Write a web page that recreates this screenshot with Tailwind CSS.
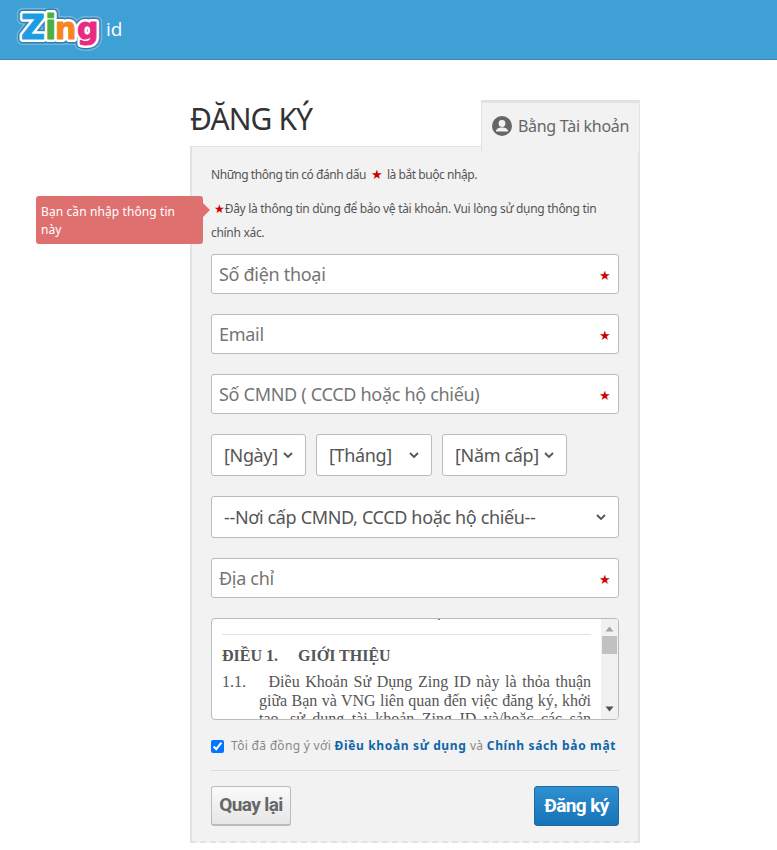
<!DOCTYPE html>
<html lang="vi">
  <head>
    <meta charset="UTF-8" />
    <title>Zing ID - Đăng ký</title>
    <script src="https://cdn.jsdelivr.net/npm/@tailwindcss/browser@4"></script>
  </head>
  <body class="bg-white font-['Noto_Sans',sans-serif] text-[#555]">
    <!-- Header -->
    <header class="h-[60px] bg-[#3fa0d6] border-b border-[#3a87b8] flex items-center pl-[15px]">
      <svg width="90" height="44" viewBox="0 0 90 44" class="block">
        <g font-family="DejaVu Sans" font-weight="700" font-size="33" stroke-linejoin="round">
          <g stroke="#76b6dc" stroke-width="12" fill="none">
            <text x="6" y="31">Z</text><text x="30" y="31">i</text><text x="40" y="31" font-size="30">n</text><text x="62" y="31" font-size="30">g</text>
          </g>
          <g stroke="#2f7fb3" stroke-width="9" fill="none">
            <text x="6" y="31">Z</text><text x="30" y="31">i</text><text x="40" y="31" font-size="30">n</text><text x="62" y="31" font-size="30">g</text>
          </g>
          <g stroke="#fff" stroke-width="6" fill="#fff">
            <text x="6" y="31">Z</text><text x="30" y="31">i</text><text x="40" y="31" font-size="30">n</text><text x="62" y="31" font-size="30">g</text>
          </g>
          <g stroke-width="1">
            <text x="6" y="31" fill="#1b9ce3" stroke="#1b9ce3">Z</text>
            <text x="30" y="31" fill="#4caf3f" stroke="#4caf3f">i</text>
            <text x="40" y="31" font-size="30" fill="#f6861f" stroke="#f6861f">n</text>
            <text x="62" y="31" font-size="30" fill="#ea2a82" stroke="#ea2a82">g</text>
          </g>
        </g>
      </svg>
      <span class="ml-[1px] text-[19px] text-white font-['Open_Sans',sans-serif]">id</span>
    </header>

    <main class="relative w-[450px] ml-[190px]">
      <!-- Title and tab -->
      <div class="h-[86px] flex justify-between items-start pt-[40px]">
        <h1 class="text-[30px] leading-[38px] tracking-[-0.9px] text-[#333]">ĐĂNG KÝ</h1>
        <div class="relative z-10 w-[159px] h-[52px] bg-[#f2f2f2] border-x border-[#e2e2e2] border-t-[3px] flex items-center pl-[10px] gap-[6px] pb-[3px]">
          <svg width="20" height="20" viewBox="0 0 20 20">
            <circle cx="10" cy="10" r="10" fill="#666" />
            <circle cx="10" cy="7.500" r="3.400" fill="#f2f2f2" />
            <path d="M4 15.500c0-2.800 2.600-4 6-4s6 1.200 6 4z" fill="#f2f2f2" />
          </svg>
          <span class="text-base tracking-[-0.3px] text-[#666]">Bằng Tài khoản</span>
        </div>
      </div>

      <!-- Form panel -->
      <div class="h-[697px] bg-[#f2f2f2] border-x-2 border-t border-b-2 border-[#e2e2e2] [border-bottom-style:dashed] px-[19px] pt-[15px]">
        <p class="text-xs leading-[24px] tracking-[-0.45px]">
          Những thông tin có đánh dấu <span class="text-[#c00] text-[13px] mx-[2px]">★</span> là bắt buộc nhập.
        </p>
        <p class="text-xs leading-[24px] tracking-[-0.3px] mt-[10px]">
          <span class="text-[#c00] ml-[3px]">★</span>Đây là thông tin dùng để bảo vệ tài khoản. Vui lòng sử dụng thông tin chính xác.
        </p>

        <div class="relative mt-[9px]">
          <input placeholder="Số điện thoại" class="w-full h-[40px] bg-white border border-[#bbb] rounded-[3px] pl-[7px] pr-2 text-lg tracking-[-0.3px] placeholder:text-[#757575]" />
          <span class="absolute right-[8px] top-[12px] text-[#c00] text-[13px]">★</span>
        </div>
        <div class="relative mt-[20px]">
          <input placeholder="Email" class="w-full h-[40px] bg-white border border-[#bbb] rounded-[3px] pl-[7px] pr-2 text-lg tracking-[-0.3px] placeholder:text-[#757575]" />
          <span class="absolute right-[8px] top-[12px] text-[#c00] text-[13px]">★</span>
        </div>
        <div class="relative mt-[20px]">
          <input placeholder="Số CMND ( CCCD hoặc hộ chiếu)" class="w-full h-[40px] bg-white border border-[#bbb] rounded-[3px] pl-[7px] pr-2 text-lg tracking-[-0.3px] placeholder:text-[#757575]" />
          <span class="absolute right-[8px] top-[12px] text-[#c00] text-[13px]">★</span>
        </div>

        <!-- Date selects -->
        <div class="flex gap-[10px] mt-[20px]">
          <div class="relative w-[95px] h-[42px] bg-white border border-[#bbb] rounded-[3px] flex items-center pl-[12px] text-lg tracking-[-0.35px]">
            [Ngày]
            <svg class="absolute right-[12px] top-[16px]" width="10" height="8" viewBox="0 0 10 8"><path d="M1 2l4 4 4-4" fill="none" stroke="#555" stroke-width="1.800" /></svg>
          </div>
          <div class="relative w-[116px] h-[42px] bg-white border border-[#bbb] rounded-[3px] flex items-center pl-[12px] text-lg tracking-[-0.35px]">
            [Tháng]
            <svg class="absolute right-[12px] top-[16px]" width="10" height="8" viewBox="0 0 10 8"><path d="M1 2l4 4 4-4" fill="none" stroke="#555" stroke-width="1.800" /></svg>
          </div>
          <div class="relative w-[125px] h-[42px] bg-white border border-[#bbb] rounded-[3px] flex items-center pl-[12px] text-lg tracking-[-0.35px]">
            [Năm cấp]
            <svg class="absolute right-[12px] top-[16px]" width="10" height="8" viewBox="0 0 10 8"><path d="M1 2l4 4 4-4" fill="none" stroke="#555" stroke-width="1.800" /></svg>
          </div>
        </div>

        <div class="relative h-[42px] mt-[20px] bg-white border border-[#bbb] rounded-[3px] flex items-center pl-[12px] text-lg tracking-[-0.35px]">
          --Nơi cấp CMND, CCCD hoặc hộ chiếu--
          <svg class="absolute right-[12px] top-[16px]" width="10" height="8" viewBox="0 0 10 8"><path d="M1 2l4 4 4-4" fill="none" stroke="#555" stroke-width="1.800" /></svg>
        </div>

        <div class="relative mt-[20px]">
          <input placeholder="Địa chỉ" class="w-full h-[40px] bg-white border border-[#bbb] rounded-[3px] pl-[7px] pr-2 text-lg tracking-[-0.3px] placeholder:text-[#757575]" />
          <span class="absolute right-[8px] top-[12px] text-[#c00] text-[13px]">★</span>
        </div>

        <!-- Terms box -->
        <div class="relative h-[102px] mt-[20px] bg-white border border-[#bbb] rounded-[4px] overflow-hidden font-['Liberation_Serif',serif] text-[#555]">
          <div class="absolute left-[226px] top-0 w-[2px] h-px bg-[#777]"></div>
          <div class="ml-[10px] mr-[27px] mt-[15px] border-t border-[#e2e2e2] pt-[11px]">
            <p class="text-base leading-[20px] font-bold whitespace-pre">ĐIỀU 1.     GIỚI THIỆU</p>
            <p class="text-base leading-[18.5px] mt-[7px] pl-[37px] -indent-[37px] text-justify">
              1.1.&nbsp;&nbsp;&nbsp;&nbsp;Điều Khoản Sử Dụng Zing ID này là thỏa thuận giữa Bạn và VNG liên quan đến việc đăng ký, khởi tạo, sử dụng tài khoản Zing ID và/hoặc các sản phẩm
            </p>
          </div>
          <!-- Scrollbar -->
          <div class="absolute right-0 top-0 bottom-0 w-[17px] bg-[#f1f1f1]">
            <svg class="absolute left-[4px] top-[7px]" width="9" height="6" viewBox="0 0 9 6"><path d="M4.500 0.500L8.500 5.500H0.500z" fill="#a3a3a3" /></svg>
            <div class="absolute left-[1px] right-[1px] top-[17px] h-[18px] bg-[#c1c1c1]"></div>
            <svg class="absolute left-[4px] bottom-[7px]" width="9" height="6" viewBox="0 0 9 6"><path d="M0.500 0.500H8.500L4.500 5.500z" fill="#505050" /></svg>
          </div>
        </div>

        <!-- Agreement -->
        <label class="flex items-center mt-[18px] text-xs text-[#888] tracking-[0.3px]">
          <input type="checkbox" checked class="w-[13px] h-[13px] accent-[#0075ff] mr-[7px]" />
          <span>Tôi đã đồng ý với <a class="font-bold tracking-[0.65px] text-[#0f65a8]">Điều khoản sử dụng</a> và <a class="font-bold tracking-[0.65px] text-[#0f65a8]">Chính sách bảo mật</a></span>
        </label>

        <div class="border-t border-[#ddd] mt-[16px] pt-[15px] flex justify-between">
          <button class="w-[80px] h-[40px] rounded-[3px] border border-[#bbb] border-b-2 bg-gradient-to-b from-[#fafafa] to-[#e6e6e6] font-['Roboto',sans-serif] font-bold text-[19px] tracking-[-0.6px] text-[#666]">Quay lại</button>
          <button class="w-[85px] h-[40px] rounded-[3px] border border-[#1a6aa3] bg-gradient-to-b from-[#2f90d2] to-[#1673b5] font-['Roboto',sans-serif] font-bold text-[19px] tracking-[-0.6px] text-white">Đăng ký</button>
        </div>
      </div>

      <!-- Validation tooltip -->
      <div class="absolute left-[-154px] top-[136px] w-[167px] h-[48px] bg-[#df7070] rounded-[3px] text-white text-xs leading-[18px] tracking-[0.1px] pl-[5px] pr-[6px] py-[7px]">
        Bạn cần nhập thông tin này
        <div class="absolute right-[-7px] top-[7px] w-0 h-0 border-y-[7px] border-y-transparent border-l-[7px] border-l-[#df7070]"></div>
      </div>
    </main>
  </body>
</html>
